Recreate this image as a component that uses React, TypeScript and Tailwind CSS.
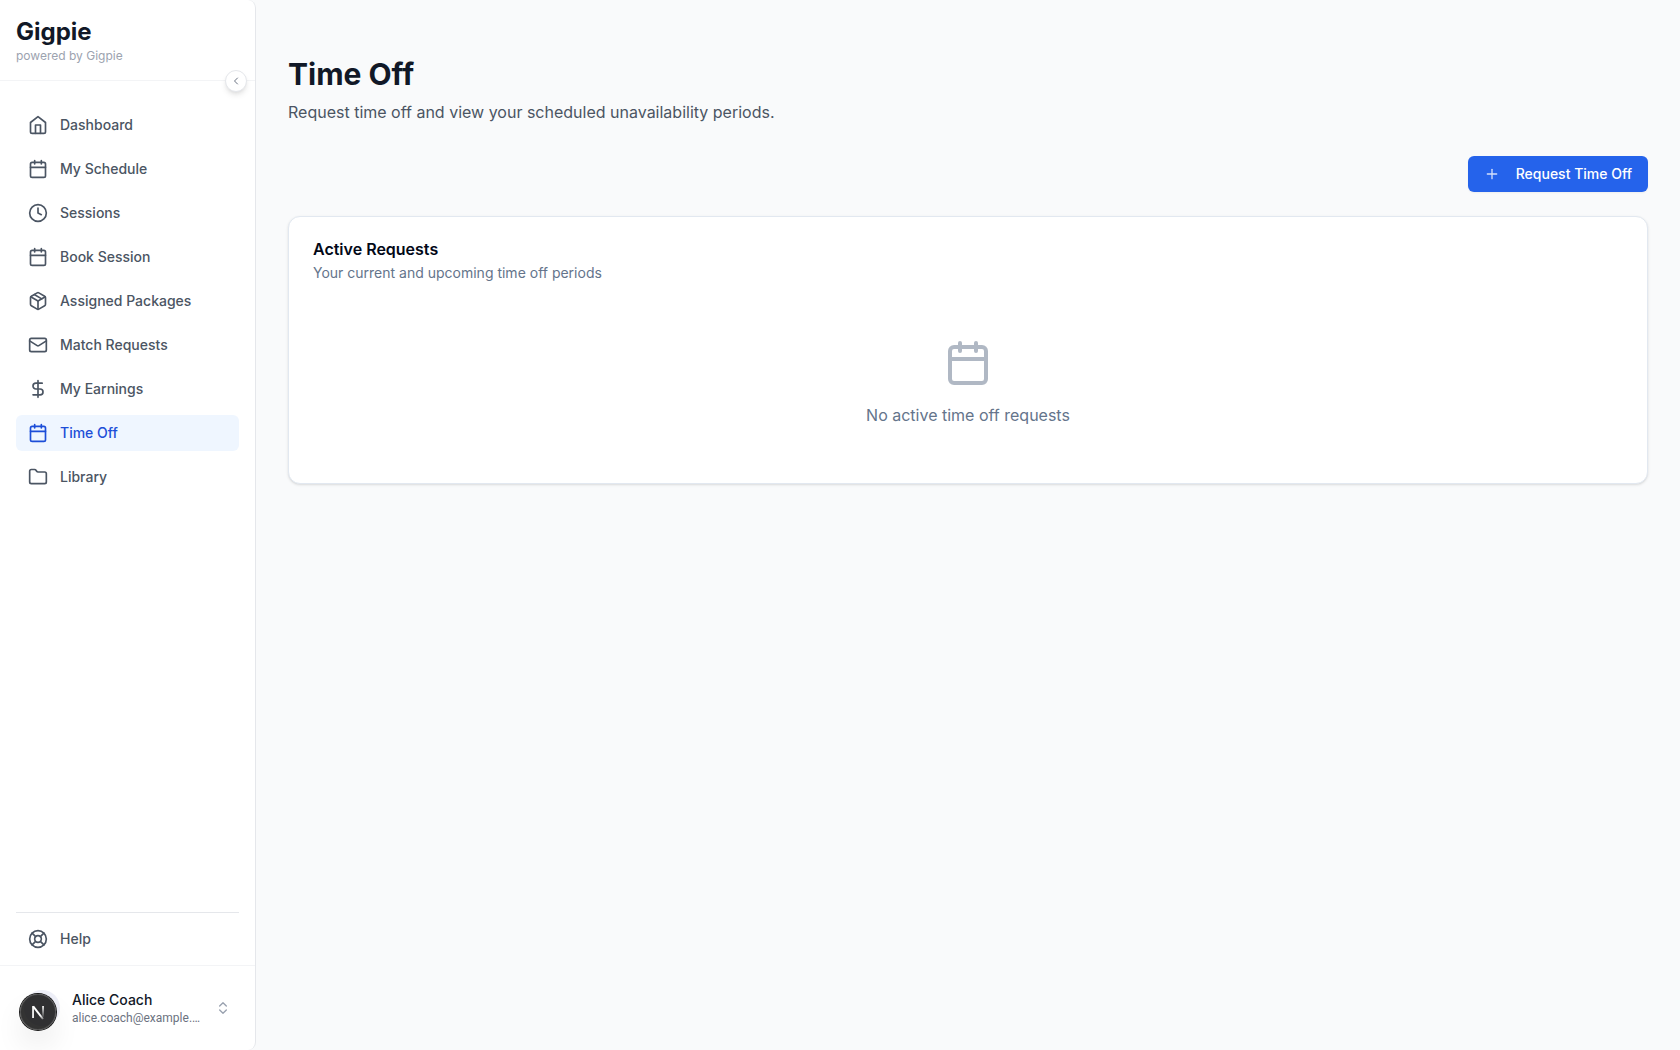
import {
  Calendar,
  ChevronLeft,
  ChevronsUpDown,
  Clock,
  DollarSign,
  Folder,
  LifeBuoy,
  Mail,
  Package,
  Plus,
} from "lucide-react";
import { clsx } from "clsx";
import type { ComponentType } from "react";

type NavItem = { label: string; href: string; icon: ComponentType<{ className?: string }> };

function HomeIcon({ className }: { className?: string }) {
  return (
    <svg
      viewBox="0 0 24 24"
      fill="none"
      stroke="currentColor"
      strokeWidth="2"
      strokeLinecap="round"
      strokeLinejoin="round"
      className={className}
      aria-hidden="true"
    >
      <path d="m3 9 9-7 9 7v11a2 2 0 0 1-2 2H5a2 2 0 0 1-2-2z" />
      <polyline points="9 22 9 12 15 12 15 22" />
    </svg>
  );
}

const NAV_ITEMS: NavItem[] = [
  { label: "Dashboard", href: "#dashboard", icon: HomeIcon },
  { label: "My Schedule", href: "#schedule", icon: Calendar },
  { label: "Sessions", href: "#sessions", icon: Clock },
  { label: "Book Session", href: "#book", icon: Calendar },
  { label: "Assigned Packages", href: "#packages", icon: Package },
  { label: "Match Requests", href: "#matches", icon: Mail },
  { label: "My Earnings", href: "#earnings", icon: DollarSign },
  { label: "Time Off", href: "#time-off", icon: Calendar },
  { label: "Library", href: "#library", icon: Folder },
];

function NavLink({ item, active = false }: { item: NavItem; active?: boolean }) {
  const Icon = item.icon;
  return (
    <a
      href={item.href}
      className={clsx(
        "flex h-9 items-center gap-3 rounded-md px-3 text-sm font-medium",
        active ? "bg-[#eff6ff] text-[#1d4ed8]" : "text-[#4b5563] hover:bg-gray-50",
      )}
    >
      <Icon className="size-5 shrink-0" />
      {item.label}
    </a>
  );
}

function DevBadge() {
  return (
    <button
      type="button"
      aria-label="Open dev tools"
      className="fixed bottom-5 left-5 size-9 rounded-full bg-black/80 shadow-[0_0_0_1px_#171717,inset_0_0_0_1px_rgba(255,255,255,0.14),0_16px_32px_-8px_rgba(0,0,0,0.24)]"
    >
      <svg viewBox="0 0 36 36" fill="none" className="size-9" aria-hidden="true">
        <defs>
          <linearGradient id="diag" x1="18" y1="18" x2="24" y2="26" gradientUnits="userSpaceOnUse">
            <stop offset="0.4" stopColor="#fff" />
            <stop offset="1" stopColor="#fff" stopOpacity="0.2" />
          </linearGradient>
          <linearGradient id="stem" x1="23" y1="12" x2="23" y2="23" gradientUnits="userSpaceOnUse">
            <stop stopColor="#fff" />
            <stop offset="1" stopColor="#fff" stopOpacity="0.1" />
          </linearGradient>
        </defs>
        <rect x="12.2" y="12" width="1.7" height="12" fill="#fff" />
        <line x1="13.2" y1="12.4" x2="23" y2="25" stroke="url(#diag)" strokeWidth="2" />
        <rect x="22.2" y="12" width="1.7" height="11" fill="url(#stem)" />
      </svg>
    </button>
  );
}

function Sidebar() {
  return (
    <aside className="relative flex w-64 shrink-0 flex-col rounded-r-lg border-r border-[#e5e7eb] bg-white">
      <div className="border-b border-[#f3f4f6] p-4">
        <div className="text-2xl font-bold text-[#111827]">Gigpie</div>
        <div className="text-xs text-[#9ca3af]">powered by Gigpie</div>
      </div>
      <button
        type="button"
        aria-label="Collapse sidebar"
        className="absolute top-[70px] right-2 flex size-[22px] items-center justify-center rounded-full border border-[#e5e7eb] bg-white text-gray-500 shadow-md"
      >
        <ChevronLeft className="size-3" />
      </button>

      <nav className="flex flex-1 flex-col gap-2 px-4 pt-[26px]">
        {NAV_ITEMS.map((item) => (
          <NavLink key={item.label} item={item} active={item.label === "Time Off"} />
        ))}
      </nav>

      <div className="px-4 pb-2">
        <div className="border-t border-[#e5e7eb] pt-2">
          <NavLink item={{ label: "Help", href: "#help", icon: LifeBuoy }} />
        </div>
      </div>

      <div className="border-t border-[#f3f4f6] p-4">
        <button type="button" className="flex w-full items-center gap-3 rounded-md p-2 text-left">
          <span className="size-9 shrink-0 rounded-full bg-[#eeeff8]" />
          <span className="min-w-0 flex-1">
            <span className="block truncate text-sm font-medium text-[#111827]">Alice Coach</span>
            <span className="block truncate font-['Roboto',sans-serif] text-xs text-[#6b7280]">
              alice.coach@example.…
            </span>
          </span>
          <ChevronsUpDown className="size-4 shrink-0 text-gray-400" />
        </button>
      </div>
    </aside>
  );
}

export default function App() {
  return (
    <div className="flex min-h-screen bg-[#f9fafb] font-['Inter',sans-serif]">
      <Sidebar />
      <main className="min-w-0 flex-1 px-8 py-14">
        <h1 className="text-3xl font-bold text-[#111827]">Time Off</h1>
        <p className="mt-2 text-base text-[#4b5563]">
          Request time off and view your scheduled unavailability periods.
        </p>

        <div className="mt-8 flex justify-end">
          <button
            type="button"
            className="flex h-9 items-center gap-4 rounded-md bg-[#2563eb] px-4 text-sm font-medium text-white shadow-xs"
          >
            <Plus className="size-4 opacity-80" />
            Request Time Off
          </button>
        </div>

        <section className="mt-6 rounded-xl border border-[#e2e8f0] bg-white p-6 shadow-sm">
          <h2 className="text-base leading-4 font-semibold text-[#020817]">Active Requests</h2>
          <p className="mt-1.5 text-sm text-[#64748b]">Your current and upcoming time off periods</p>
          <div className="mt-6 flex flex-col items-center gap-4 py-8 text-[#64748b]">
            <Calendar className="size-12 opacity-50" />
            <p className="text-base">No active time off requests</p>
          </div>
        </section>
      </main>
      <DevBadge />
    </div>
  );
}
